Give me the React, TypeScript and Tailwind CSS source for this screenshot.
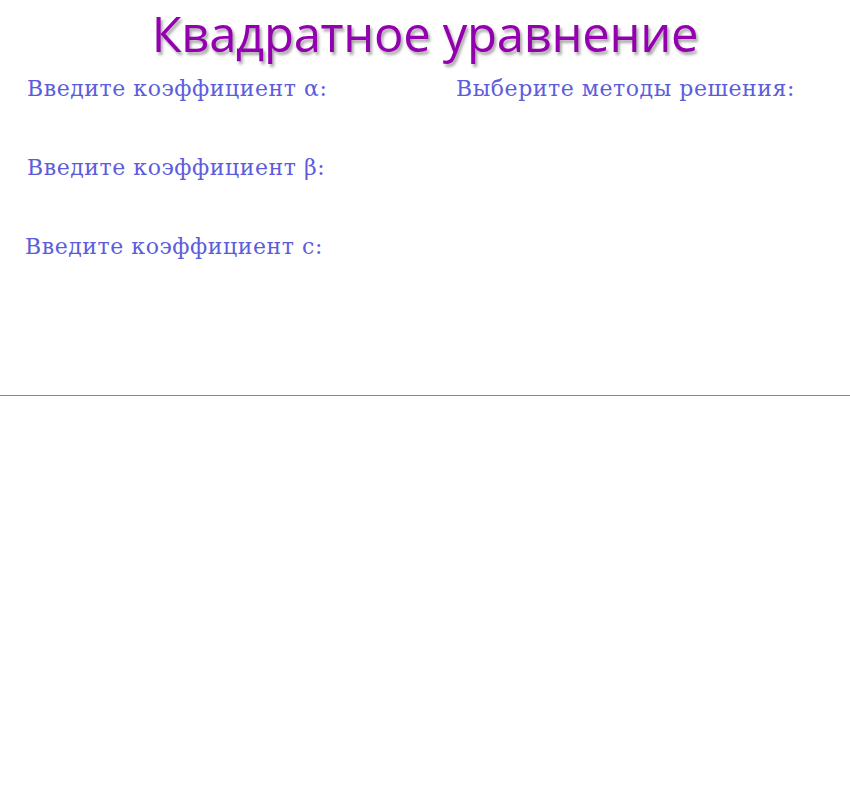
export default function App() {
  return (
    <div className="w-[850px] h-[800px] bg-white relative">
      <h1 className="text-center text-[49px] leading-[66px] text-[#9400b0] [text-shadow:2px_3px_3px_rgba(0,0,0,0.35)] font-['Open_Sans',sans-serif] tracking-[-0.3px]">
        Квадратное уравнение
      </h1>
      <div className="flex font-['DejaVu_Serif',serif] text-[22px] leading-[28px] tracking-[0.55px] text-[#5c5cdc]">
        <div className="w-[430px] flex flex-col gap-[51px] pl-[27px] pt-[9px]">
          <p>Введите коэффициент α:</p>
          <p>Введите коэффициент β:</p>
          <p className="-ml-[2px]">Введите коэффициент c:</p>
        </div>
        <div className="pl-[26px] pt-[9px]">
          <p>Выберите методы решения:</p>
        </div>
      </div>
      <div className="mt-[134px] h-px bg-[#7c7ce4]" />
    </div>
  );
}
